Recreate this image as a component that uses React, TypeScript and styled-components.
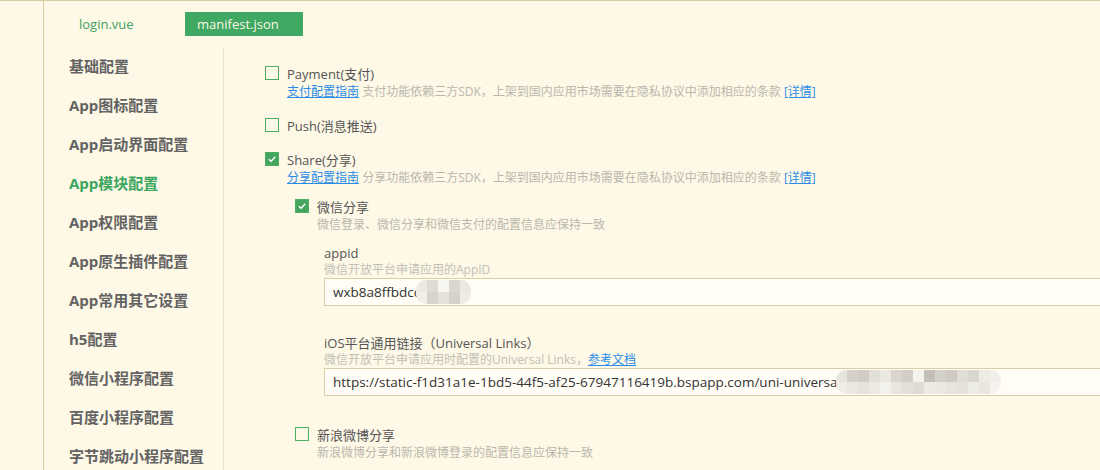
import React from "react";
import styled, { createGlobalStyle } from "styled-components";

const FONT = `"Open Sans", "Noto Sans CJK SC", sans-serif`;

const GlobalStyle = createGlobalStyle`
  html, body {
    margin: 0;
    padding: 0;
    background: #fef8e6;
    overflow: hidden;
  }
  * { box-sizing: border-box; }
`;

const Frame = styled.div`
  display: flex;
  width: 1100px;
  height: 470px;
  border-top: 1px solid #d9cca3;
  background: #fef8e6;
  font-family: ${FONT};
  overflow: hidden;
`;

const Gutter = styled.div`
  width: 44px;
  flex: none;
  border-right: 1px solid #d6c9a1;
`;

const Main = styled.div`
  flex: 1;
  display: flex;
  flex-direction: column;
  min-width: 0;
`;

const TabBar = styled.div`
  height: 46px;
  flex: none;
  display: flex;
  align-items: flex-start;
  padding: 11px 0 0 23px;
`;

const Tab = styled.div<{ $active?: boolean }>`
  width: 118px;
  height: 24px;
  padding-left: 12px;
  line-height: 24px;
  font-size: 13px;
  color: ${(p) => (p.$active ? "#fbf6e4" : "#3fa35f")};
  background: ${(p) => (p.$active ? "#3fa862" : "transparent")};
`;

const Body = styled.div`
  flex: 1;
  display: flex;
  min-height: 0;
`;

const Sidebar = styled.nav`
  width: 180px;
  flex: none;
  border-right: 1px solid #ede3c6;
`;

const NavItem = styled.div<{ $active?: boolean }>`
  height: 39px;
  line-height: 39px;
  padding-left: 25px;
  font-size: 15px;
  font-weight: 700;
  color: ${(p) => (p.$active ? "#3ba65e" : "#636363")};
  white-space: nowrap;
`;

const Content = styled.div`
  flex: 1;
  min-width: 0;
  padding: 16px 0 0 41px;
`;

const Block = styled.div<{ $gap?: number }>`
  margin-bottom: ${(p) => p.$gap ?? 14}px;
`;

const CheckRow = styled.div`
  display: flex;
  align-items: center;
  height: 20px;
`;

const Box = styled.span<{ $checked?: boolean }>`
  width: 14px;
  height: 14px;
  flex: none;
  border: 1px solid #4caf61;
  background: ${(p) => (p.$checked ? "#43a55e" : "transparent")};
  display: flex;
  align-items: center;
  justify-content: center;
`;

const Label = styled.span`
  margin-left: 8px;
  font-size: 13px;
  color: #555;
  white-space: nowrap;
`;

const Desc = styled.div`
  margin-left: 22px;
  height: 18px;
  line-height: 18px;
  font-size: 12px;
  color: #bab7ad;
  white-space: nowrap;
`;

const Link = styled.a`
  color: #2a8ce6;
  text-decoration: underline;
  cursor: pointer;
`;

const Nested = styled.div`
  margin: 9px 0 0 30px;
`;

const Fields = styled.div`
  margin: 10px 0 0 29px;
`;

const Field = styled.div`
  margin-bottom: 28px;
`;

const FieldLabel = styled.div`
  height: 18px;
  line-height: 18px;
  font-size: 13px;
  color: #555;
  white-space: nowrap;
`;

const FieldHint = styled.div`
  height: 16px;
  line-height: 16px;
  font-size: 12px;
  color: #c2bfb6;
  white-space: nowrap;
`;

const InputWrap = styled.div`
  position: relative;
  width: 820px;
`;

const Input = styled.div`
  height: 28px;
  line-height: 26px;
  border: 1px solid #d9cea6;
  background: #fffdf6;
  padding-left: 8px;
  font-size: 13.5px;
  color: #333;
  white-space: nowrap;
  overflow: hidden;
`;

const Mosaic = styled.div<{ $left: number; $cols: number }>`
  position: absolute;
  top: 2px;
  left: ${(p) => p.$left}px;
  display: grid;
  grid-template-columns: repeat(${(p) => p.$cols}, 11px);
  grid-auto-rows: 12px;
  border-radius: 10px;
  overflow: hidden;
  filter: blur(0.6px);
`;

const Cell = styled.span<{ $c: string }>`
  background: ${(p) => p.$c};
`;

const Check = () => (
  <svg width="10" height="10" viewBox="0 0 10 10">
    <path d="M1.8 5.2 L4.1 7.3 L8.3 2.8" fill="none" stroke="#fff" strokeWidth="1.4" />
  </svg>
);

const CheckItem: React.FC<{ checked?: boolean; label: string }> = ({ checked, label }) => (
  <CheckRow>
    <Box $checked={checked}>{checked && <Check />}</Box>
    <Label>{label}</Label>
  </CheckRow>
);

const BlurPatch: React.FC<{ left: number; top: string[]; bottom: string[] }> = ({ left, top, bottom }) => (
  <Mosaic $left={left} $cols={top.length}>
    {top.map((c, i) => (
      <Cell key={"t" + i} $c={c} />
    ))}
    {bottom.map((c, i) => (
      <Cell key={"b" + i} $c={c} />
    ))}
  </Mosaic>
);

const navItems = [
  "基础配置",
  "App图标配置",
  "App启动界面配置",
  "App模块配置",
  "App权限配置",
  "App原生插件配置",
  "App常用其它设置",
  "h5配置",
  "微信小程序配置",
  "百度小程序配置",
  "字节跳动小程序配置",
];

export default function App() {
  return (
    <>
      <GlobalStyle />
      <Frame>
        <Gutter />
        <Main>
          <TabBar>
            <Tab>login.vue</Tab>
            <Tab $active>manifest.json</Tab>
          </TabBar>
          <Body>
            <Sidebar>
              {navItems.map((n) => (
                <NavItem key={n} $active={n === "App模块配置"}>
                  {n}
                </NavItem>
              ))}
            </Sidebar>
            <Content>
              <Block>
                <CheckItem label="Payment(支付)" />
                <Desc>
                  <Link>支付配置指南</Link> 支付功能依赖三方SDK，上架到国内应用市场需要在隐私协议中添加相应的条款{" "}
                  <Link>[详情]</Link>
                </Desc>
              </Block>
              <Block>
                <CheckItem label="Push(消息推送)" />
              </Block>
              <Block>
                <CheckItem checked label="Share(分享)" />
                <Desc>
                  <Link>分享配置指南</Link> 分享功能依赖三方SDK，上架到国内应用市场需要在隐私协议中添加相应的条款{" "}
                  <Link>[详情]</Link>
                </Desc>
                <Nested>
                  <Block $gap={27}>
                    <CheckItem checked label="微信分享" />
                    <Desc>微信登录、微信分享和微信支付的配置信息应保持一致</Desc>
                    <Fields>
                      <Field>
                        <FieldLabel>appid</FieldLabel>
                        <FieldHint>微信开放平台申请应用的AppID</FieldHint>
                        <InputWrap>
                          <Input>wxb8a8ffbdcc</Input>
                          <BlurPatch
                            left={92}
                            top={["#ece9e2", "#dedbd4", "#f7f5f0", "#dad7d0", "#ebe8e2"]}
                            bottom={["#f1eee8", "#d7d4cd", "#e4e1da", "#d5d2cb", "#eeebe5"]}
                          />
                        </InputWrap>
                      </Field>
                      <Field>
                        <FieldLabel>iOS平台通用链接（Universal Links）</FieldLabel>
                        <FieldHint>
                          微信开放平台申请应用时配置的Universal Links，<Link>参考文档</Link>
                        </FieldHint>
                        <InputWrap>
                          <Input>https://static-f1d31a1e-1bd5-44f5-af25-67947116419b.bspapp.com/uni-universal</Input>
                          <BlurPatch
                            left={512}
                            top={["#e8e5de", "#d5d1ca", "#d0ccc5", "#e2dfd8", "#ebe8e1", "#dad6cf", "#d2cec7", "#f4f2ed", "#c3bfb8", "#d3d0c9", "#cfcbc4", "#e0ddd6", "#d9d6cf", "#eeebe5", "#f2efea"]}
                            bottom={["#f0ede7", "#ebe8e1", "#e6e3dc", "#ece9e3", "#f3f1ec", "#e9e6e0", "#e2dfd8", "#dedbd4", "#eeebe5", "#ebe8e2", "#e8e5de", "#e5e2db", "#ecebe4", "#e9e6df", "#f5f3ee"]}
                          />
                        </InputWrap>
                      </Field>
                    </Fields>
                  </Block>
                  <Block>
                    <CheckItem label="新浪微博分享" />
                    <Desc>新浪微博分享和新浪微博登录的配置信息应保持一致</Desc>
                  </Block>
                </Nested>
              </Block>
            </Content>
          </Body>
        </Main>
      </Frame>
    </>
  );
}
